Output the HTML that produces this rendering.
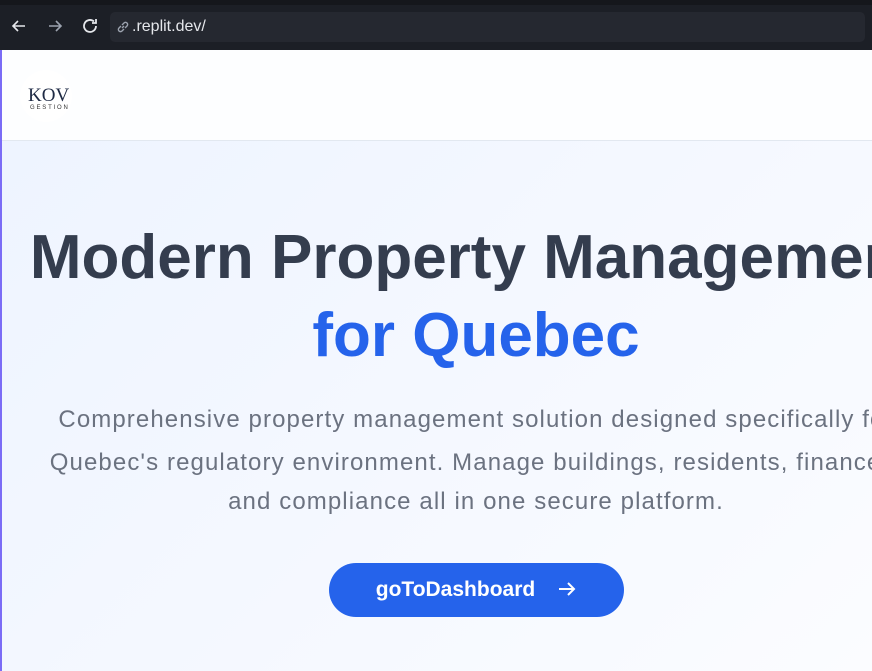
<!DOCTYPE html><html><head><style>
body{margin:0;width:872px;height:671px;overflow:hidden;font-family:"Liberation Sans",sans-serif;background:#f8faff;position:relative}
.wrap{position:absolute;left:0;top:0;width:872px;height:671px;overflow:hidden}
.chrome{position:absolute;left:0;top:0;width:872px;height:50px;background:#1c1f26}
.tabs{position:absolute;top:0;left:0;width:872px;height:5px;background:#15171c}
.url{position:absolute;left:110px;top:12px;width:755px;height:30px;background:#252830;border-radius:5px;color:#e5e7eb;font-size:16px;line-height:30px}
.lb{position:absolute;left:0;top:50px;width:2px;height:621px;background:#7b6cf6}
.hdr{position:absolute;left:2px;top:50px;width:870px;height:90px;background:#fdfeff;border-bottom:1px solid #e2e8f0}
.main{position:absolute;left:0;top:141px;width:872px;background:linear-gradient(135deg,#eef4ff,#fbfcff)}
h1{margin:0;position:absolute;left:0;width:952px;text-align:center;font-size:62px;font-weight:700;color:#343d4e;white-space:nowrap}
p{margin:0;position:absolute;left:0;width:952px;text-align:center;font-size:24px;letter-spacing:1.1px;color:#6b7280;white-space:nowrap}
.btn{position:absolute;left:329px;top:563px;width:295px;height:54px;background:#2563eb;border-radius:27px;color:#fff;font-size:21px;font-weight:700;line-height:54px;text-align:center}
</style></head><body><div class="wrap">
<div class="main" style="height:530px"></div>
<div class="chrome"><div class="tabs"></div>
<svg style="position:absolute;left:10px;top:17px" width="18" height="18" viewBox="0 0 18 18" fill="none" stroke="#e5e7eb" stroke-width="1.6"><path d="M15 9H3M8 4L3 9l5 5"/></svg>
<svg style="position:absolute;left:46px;top:17px" width="18" height="18" viewBox="0 0 18 18" fill="none" stroke="#9ca3af" stroke-width="1.6"><path d="M3 9h12M10 4l5 5-5 5"/></svg>
<svg style="position:absolute;left:80px;top:16px" width="20" height="20" viewBox="0 0 20 20" fill="none" stroke="#e5e7eb" stroke-width="1.8"><path d="M16 10a6 6 0 1 1-2-4.5M16 3v4h-4"/></svg>
<div class="url"><svg style="position:absolute;left:6px;top:8px" width="14" height="14" viewBox="0 0 14 14" fill="none" stroke="#9ca3af" stroke-width="1.4"><path d="M6 8l2-2M5 6L3 8a2 2 0 0 0 3 3l2-2M9 8l2-2a2 2 0 0 0-3-3L6 5"/></svg><span style="margin-left:22px">.replit.dev/</span></div></div>
<div class="lb"></div>
<div class="hdr"><div style="position:absolute;left:18px;top:20px;width:52px;height:52px;border-radius:50%;background:#fff"></div>
<div style="position:absolute;left:26px;top:35px;font-family:'Liberation Serif',serif;font-size:19px;color:#1e2a44">KOV</div>
<div style="position:absolute;left:28px;top:55px;font-size:6px;letter-spacing:1.8px;color:#333">GESTION</div></div>
<h1 style="top:222px">Modern Property Management</h1>
<h1 style="top:300px;color:#2563eb">for Quebec</h1>
<p style="top:406px">Comprehensive property management solution designed specifically for</p>
<p style="top:449px">Quebec's regulatory environment. Manage buildings, residents, finances,</p>
<p style="top:488px">and compliance all in one secure platform.</p>
<div class="btn">goToDashboard<svg style="margin-left:22px;vertical-align:-3px" width="20" height="20" viewBox="0 0 20 20" fill="none" stroke="#fff" stroke-width="2"><path d="M2 10h15M11 4l6 6-6 6"/></svg></div>
</div></body></html>
